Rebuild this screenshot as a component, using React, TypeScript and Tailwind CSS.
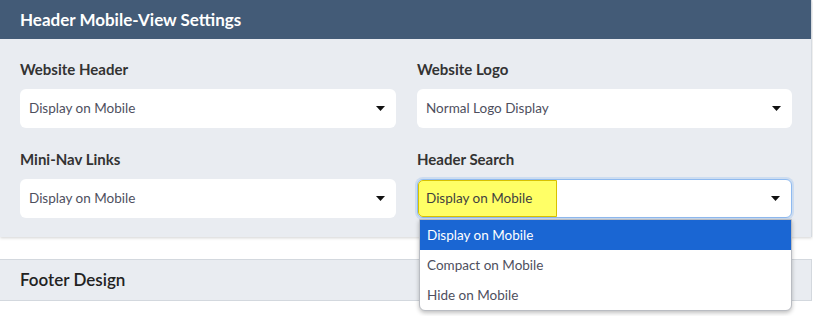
import React from 'react';

const Caret = () => (
  <svg width="9" height="5" viewBox="0 0 9 5" className="shrink-0">
    <path d="M0 0h9L4.5 5z" fill="#111" />
  </svg>
);

interface SelectProps {
  value: string;
  focused?: boolean;
}

const FakeSelect: React.FC<SelectProps> = ({ value, focused }) => (
  <div
    className={`h-[39px] bg-white rounded-md flex items-center justify-between pr-[11px] ${
      focused ? 'border border-[#8fbaf0] shadow-[0_0_0_2px_rgba(120,170,240,0.25)] pl-0' : 'pl-[9px]'
    }`}
  >
    {focused ? (
      <span className="h-[37px] w-[139px] bg-[#ffff66] border border-[#d8c200] flex items-center pl-[7px] text-[13.5px] text-[#3f3f3f] rounded-l-[5px]">
        {value}
      </span>
    ) : (
      <span className="text-[13.5px] text-[#4e4f5e]">{value}</span>
    )}
    <Caret />
  </div>
);

const Field: React.FC<{ label: string; children: React.ReactNode }> = ({ label, children }) => (
  <div className="relative">
    <div className="text-[15px] font-bold text-[#333] leading-5 mb-[10px]">{label}</div>
    {children}
  </div>
);

const options = ['Display on Mobile', 'Compact on Mobile', 'Hide on Mobile'];

export default function App() {
  return (
    <div className="w-[813px] h-[316px] bg-white overflow-hidden relative" style={{ fontFamily: 'Lato, "Noto Sans", sans-serif' }}>
      <div className="w-[812px] bg-[#e9ecf1] shadow-[0_1px_3px_rgba(0,0,0,0.18)] border-r border-[#d6dbe1]">
        <div className="h-[39px] bg-[#435b77] flex items-center px-5">
          <h2 className="text-white text-[17px] font-bold">Header Mobile-View Settings</h2>
        </div>
        <div className="grid grid-cols-[376px_375px] gap-x-[21px] gap-y-[21px] pl-5 pt-5 pb-[19px]">
          <Field label="Website Header">
            <FakeSelect value="Display on Mobile" />
          </Field>
          <Field label="Website Logo">
            <FakeSelect value="Normal Logo Display" />
          </Field>
          <Field label="Mini-Nav Links">
            <FakeSelect value="Display on Mobile" />
          </Field>
          <Field label="Header Search">
            <FakeSelect value="Display on Mobile" focused />
            <div className="absolute left-[2px] right-0 top-[70px] z-10 bg-white border border-[#b9bcc2] rounded-b-md shadow-[0_2px_4px_rgba(0,0,0,0.25)] overflow-hidden">
              {options.map((o, i) => (
                <div
                  key={o}
                  className={`h-[30px] flex items-center pl-[7px] text-[13.5px] ${
                    i === 0 ? 'bg-[#1a66d3] text-white' : 'text-[#4e4f5e]'
                  }`}
                >
                  {o}
                </div>
              ))}
            </div>
          </Field>
        </div>
      </div>

      <div className="mt-[22px] w-[812px] h-[42px] bg-[#e9ecf1] border-y border-[#d3d8de] border-r flex items-center px-5">
        <h3 className="text-[17px] font-semibold text-[#222]">Footer Design</h3>
      </div>
    </div>
  );
}
